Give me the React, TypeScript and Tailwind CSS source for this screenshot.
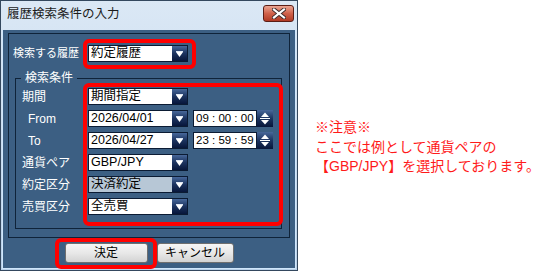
import React from "react";

const font = { fontFamily: '"Liberation Sans", "Noto Sans CJK JP", sans-serif' };

function DropButton() {
  return (
    <div className="h-full w-[15px] bg-gradient-to-b from-[#48689a] via-[#1c335f] to-[#08163a] flex items-center justify-center">
      <svg width="15" height="15" viewBox="0 0 15 15">
        <rect x="4" y="5" width="7" height="1" fill="#dfe8f5" />
        <polygon points="4,6 11,6 7.5,11" fill="#ffffff" />
      </svg>
    </div>
  );
}

function Spinner() {
  return (
    <div className="h-[17px] w-[16px] bg-gradient-to-b from-[#48689a] via-[#1c335f] to-[#08163a] flex items-center justify-center">
      <svg width="16" height="17" viewBox="0 0 16 17">
        <polygon points="4,7 12,7 8,2.5" fill="#ffffff" />
        <rect x="3" y="8" width="10" height="1" fill="#ffffff" />
        <polygon points="4,10 12,10 8,14.5" fill="#ffffff" />
      </svg>
    </div>
  );
}

function Select({ text, disabled }: { text: string; disabled?: boolean }) {
  return (
    <div
      className={
        "flex h-[17px] w-[100px] border border-[#0b1b33] " +
        (disabled ? "bg-[#b7c7d6]" : "bg-white")
      }
    >
      <div className="flex-1 flex items-center pl-[2px] text-[12.5px] leading-none text-black">{text}</div>
      <DropButton />
    </div>
  );
}

function TimeBox({ text }: { text: string }) {
  return (
    <div className="flex ml-[5px]">
      <div className="flex h-[17px] w-[64px] items-center border border-[#0b1b33] bg-white pl-[2px] text-[11.5px] leading-none text-black whitespace-pre">
        {text}
      </div>
      <Spinner />
    </div>
  );
}

function Row({ label, indent, children }: { label: string; indent?: boolean; children: React.ReactNode }) {
  return (
    <div className="flex h-[17px] items-center">
      <div className={"w-[72px] text-[12px] leading-none text-white " + (indent ? "pl-[12px]" : "pl-[6px]")}>
        {label}
      </div>
      {children}
    </div>
  );
}

function Button({ label }: { label: string }) {
  return (
    <div className="flex h-[20px] items-center justify-center rounded-[3px] border border-[#6f6f6f] bg-gradient-to-b from-[#f6f6f6] via-[#e8e8e8] to-[#d3d3d3] text-[12px] leading-none text-black">
      {label}
    </div>
  );
}

export default function App() {
  return (
    <div className="relative flex h-[272px] w-[545px] bg-white" style={font}>
      {/* dialog */}
      <div className="flex h-[271px] w-[298px] shrink-0 flex-col border border-[#34485e] bg-gradient-to-b from-[#dbe8f5] to-[#b8d0e9]">
        <div className="flex h-[29px] items-start">
          <span className="mt-[7px] pl-[6px] text-[12.5px] leading-none text-[#1b1b1b]">履歴検索条件の入力</span>
          <div className="ml-auto mr-[3px] mt-[4px] flex h-[17px] w-[31px] items-center justify-center rounded-[3px] border border-[#5b1e16] bg-gradient-to-b from-[#e9a593] via-[#d0614a] to-[#b03a24]">
            <svg width="14" height="11" viewBox="0 0 14 11">
              <path d="M2 1.5 L12 9.5 M12 1.5 L2 9.5" stroke="#3b2b2b" strokeWidth="4" strokeLinecap="square" />
              <path d="M2 1.5 L12 9.5 M12 1.5 L2 9.5" stroke="#ffffff" strokeWidth="2.2" strokeLinecap="square" />
            </svg>
          </div>
        </div>
        <div className="mx-[1px] mb-[1px] flex flex-1 flex-col border-x border-b border-[#cfe6fb] bg-[#3c5f83]">
          {/* panel */}
          <div className="mx-[5px] mt-[3px] h-[205px] border border-[#0f2339]">
            <div className="flex h-[17px] items-center mt-[11px]">
              <div className="w-[79px] pl-[4px] text-[11px] leading-none text-white">検索する履歴</div>
              <Select text="約定履歴" />
            </div>
            {/* group */}
            <div className="relative ml-[6px] mt-[16px] h-[151px] w-[267px] border border-[#0f2339]">
              <span className="absolute -top-[8px] left-[5px] bg-[#3c5f83] px-[4px] text-[12px] leading-[14px] text-white">
                検索条件
              </span>
              <div className="flex flex-col gap-[5px] pt-[9px]">
                <Row label="期間">
                  <Select text="期間指定" />
                </Row>
                <Row label="From" indent>
                  <Select text="2026/04/01" />
                  <TimeBox text="09 : 00 : 00" />
                </Row>
                <Row label="To" indent>
                  <Select text="2026/04/27" />
                  <TimeBox text="23 : 59 : 59" />
                </Row>
                <Row label="通貨ペア">
                  <Select text="GBP/JPY" />
                </Row>
                <Row label="約定区分">
                  <Select text="決済約定" disabled />
                </Row>
                <Row label="売買区分">
                  <Select text="全売買" />
                </Row>
              </div>
            </div>
          </div>
          <div className="mt-[5px] flex justify-center gap-[9px]">
            <div className="w-[83px]">
              <Button label="決定" />
            </div>
            <div className="w-[77px]">
              <Button label="キャンセル" />
            </div>
          </div>
        </div>
      </div>

      {/* note */}
      <div className="flex-1 whitespace-nowrap pl-[17px] pt-[118px] text-[14px] leading-[19.5px] text-[#ff1a1a]">
        <div>※注意※</div>
        <div>ここでは例として通貨ペアの</div>
        <div>【GBP/JPY】を選択しております。</div>
      </div>

      {/* red highlight frames */}
      <div className="absolute left-[83px] top-[39px] h-[30px] w-[113px] rounded-[6px] border-4 border-[#ff0000]" />
      <div className="absolute left-[83px] top-[83px] h-[143px] w-[200px] rounded-[6px] border-4 border-[#ff0000]" />
      <div className="absolute left-[55px] top-[238px] h-[31px] w-[102px] rounded-[6px] border-4 border-[#ff0000]" />
    </div>
  );
}
